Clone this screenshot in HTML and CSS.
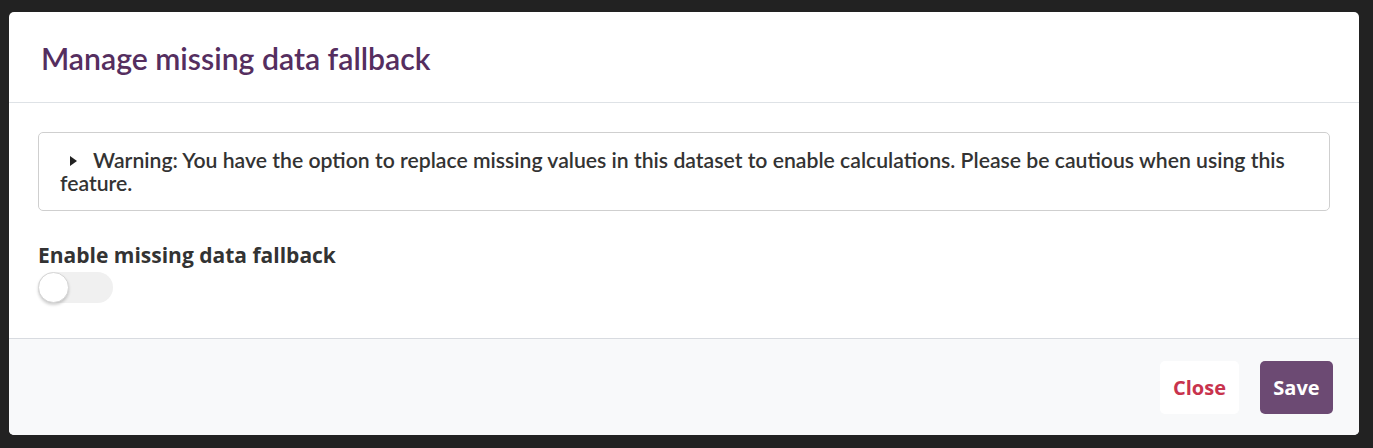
FILE: index.html
```html
<!DOCTYPE html>
<html lang="en">
<head>
<meta charset="utf-8">
<title>Manage missing data fallback</title>
<link rel="stylesheet" href="styles.css">
</head>
<body>
<div class="modal">
  <div class="modal-header">
    <h2 class="modal-title">Manage missing data fallback</h2>
  </div>
  <div class="modal-body">
    <div class="warning-box">
      <svg class="caret" width="7" height="10" viewBox="0 0 7 10"><path d="M0 0 L7 5 L0 10 Z" fill="#222"/></svg>
      <span>Warning: You have the option to replace missing values in this dataset to enable calculations. Please be cautious when using this feature.</span>
    </div>
    <div class="field">
      <label class="field-label">Enable missing data fallback</label>
      <div class="toggle"><div class="knob"></div></div>
    </div>
  </div>
  <div class="modal-footer">
    <button class="btn btn-close">Close</button>
    <button class="btn btn-save">Save</button>
  </div>
</div>
</body>
</html>
```
FILE: styles.css
```css
html, body {
  margin: 0;
  padding: 0;
  background: #222222;
  height: 100%;
}
body {
  padding: 12px 14px 0 9px;
  box-sizing: border-box;
}
.modal {
  width: 1350px;
  height: 423px;
  background: #ffffff;
  border-radius: 5px;
  display: flex;
  flex-direction: column;
  overflow: hidden;
}
.modal-header {
  height: 91px;
  border-bottom: 1px solid #dee2e6;
  display: flex;
  align-items: center;
  padding: 0 32px;
  box-sizing: border-box;
  flex: none;
}
.modal-title {
  margin: 0;
  font-family: Lato, "Liberation Sans", sans-serif;
  font-weight: 600;
  font-size: 30.2px;
  color: #552e5f;
  padding-top: 2px;
}
.modal-body {
  flex: 1;
  padding: 29px 29px 0 29px;
}
.warning-box {
  border: 1px solid #cfcfcf;
  border-radius: 5px;
  padding: 16px 21px 15px 21px;
  font-family: Lato, "Liberation Sans", sans-serif;
  font-weight: 600;
  font-size: 21.2px;
  line-height: 23px;
  color: #333333;
}
.caret {
  margin: 0 11px 0 10px;
  vertical-align: 2px;
}
.field {
  margin-top: 31px;
}
.field-label {
  display: block;
  font-family: "Open Sans", "Liberation Sans", sans-serif;
  font-weight: 700;
  font-size: 21px;
  line-height: 26px;
  color: #333333;
}
.toggle {
  margin-top: 4px;
  width: 75px;
  height: 31px;
  border-radius: 16px;
  background: #f0f0f0;
  position: relative;
}
.knob {
  position: absolute;
  left: 0;
  top: 0;
  width: 29px;
  height: 29px;
  border-radius: 50%;
  background: #ffffff;
  border: 1px solid #d6d6d6;
  box-shadow: 0 2px 3px rgba(0,0,0,0.18);
}
.modal-footer {
  height: 97px;
  flex: none;
  border-top: 1px solid #d8dbe0;
  background: #f8f9fa;
  display: flex;
  justify-content: flex-end;
  align-items: center;
  gap: 21px;
  padding: 0 26px;
  box-sizing: border-box;
}
.btn {
  height: 53px;
  border: none;
  border-radius: 5px;
  font-family: "Open Sans", "Liberation Sans", sans-serif;
  font-weight: 700;
  font-size: 20px;
  padding: 0 12px;
  cursor: pointer;
}
.btn-close {
  background: #ffffff;
  color: #c8334d;
  width: 79px;
}
.btn-save {
  background: #6c4a73;
  color: #ffffff;
  width: 73px;
}
```
